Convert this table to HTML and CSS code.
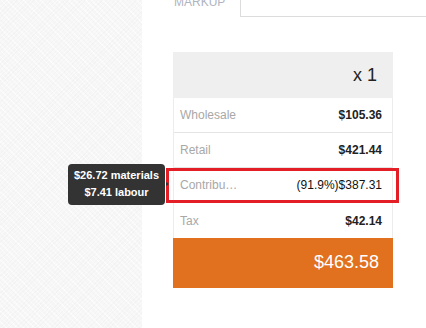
FILE: index.html
```html
<!DOCTYPE html>
<html>
<head>
<meta charset="utf-8">
<link rel="stylesheet" href="styles.css">
</head>
<body>
<div class="page">
  <div class="sidebar"></div>
  <div class="main">
    <div class="tabs">
      <div class="tab">MARKUP</div>
      <div class="tab-fill"></div>
    </div>
    <div class="card">
      <div class="card-head">x 1</div>
      <div class="row"><span class="label">Wholesale</span><span class="value">$105.36</span></div>
      <div class="row"><span class="label">Retail</span><span class="value">$421.44</span></div>
      <div class="row"><span class="label label-short">Contribution</span><span class="value value-plain">(91.9%)$387.31</span></div>
      <div class="row"><span class="label">Tax</span><span class="value">$42.14</span></div>
      <div class="total">$463.58</div>
    </div>
  </div>
  <div class="highlight"></div>
  <div class="tooltip">
    <div>$26.72 materials</div>
    <div>$7.41 labour</div>
    <span class="tooltip-arrow"></span>
  </div>
</div>
</body>
</html>
```
FILE: styles.css
```css
html, body {
  margin: 0;
  padding: 0;
  background: #fff;
}
body {
  font-family: "Liberation Sans", Arial, sans-serif;
  width: 426px;
  height: 328px;
  overflow: hidden;
}
.page {
  position: relative;
  display: flex;
  height: 328px;
}
.sidebar {
  width: 142px;
  flex: none;
  background-color: #f7f7f7;
  background-image:
    repeating-linear-gradient(135deg, rgba(0,0,0,0.014) 0 1px, transparent 1px 3px),
    repeating-linear-gradient(45deg, rgba(255,255,255,0.6) 0 1px, transparent 1px 4px);
}
.main {
  flex: 1;
  display: flex;
  flex-direction: column;
}
.tabs {
  display: flex;
  margin-top: -10px;
  height: 27px;
}
.tab {
  width: 66px;
  padding-left: 32px;
  font-size: 12px;
  color: #b0b4bf;
  line-height: 14px;
  padding-top: 5px;
}
.tab-fill {
  flex: 1;
  border-left: 1px solid #dcdcdc;
  border-bottom: 1px solid #dcdcdc;
}
.card {
  margin-top: 35px;
  margin-left: 31px;
  width: 218px;
  border-left: 1px solid #ececec;
  border-right: 1px solid #ececec;
  display: flex;
  flex-direction: column;
}
.card-head {
  background: #efefef;
  height: 46px;
  box-sizing: border-box;
  padding: 13px 16px 0 0;
  text-align: right;
  font-size: 18px;
  color: #222;
  margin: 0 -1px;
}
.row {
  height: 34px;
  border-bottom: 1px solid #e4e4e4;
  display: flex;
  align-items: center;
  justify-content: space-between;
  padding: 0 10px 0 6px;
  font-size: 12px;
}
.row:nth-child(5) {
  border-bottom: none;
  height: 35px;
}
.label {
  color: #a8a8a8;
}
.label-short {
  max-width: 60px;
  overflow: hidden;
  white-space: nowrap;
  text-overflow: ellipsis;
}
.value {
  color: #222;
  font-weight: bold;
}
.value-plain {
  font-weight: normal;
  color: #111;
}
.total {
  background: #e1711f;
  height: 50px;
  box-sizing: border-box;
  margin: 0 -1px;
  padding: 14px 14px 0 0;
  text-align: right;
  color: #fff;
  font-size: 18px;
}
.highlight {
  position: absolute;
  left: 166px;
  top: 168px;
  width: 227px;
  height: 29px;
  border: 3px solid #e41e26;
}
.tooltip {
  position: absolute;
  left: 68px;
  top: 164px;
  width: 97px;
  height: 41px;
  box-sizing: border-box;
  background: #333;
  border-radius: 4px;
  color: #fff;
  font-size: 11px;
  font-weight: bold;
  text-align: center;
  padding-top: 3px;
  line-height: 17px;
}
.tooltip-arrow {
  position: absolute;
  right: -4px;
  top: 18px;
  width: 0;
  height: 0;
  border-top: 2px solid transparent;
  border-bottom: 2px solid transparent;
  border-left: 3px solid #333;
}
```
